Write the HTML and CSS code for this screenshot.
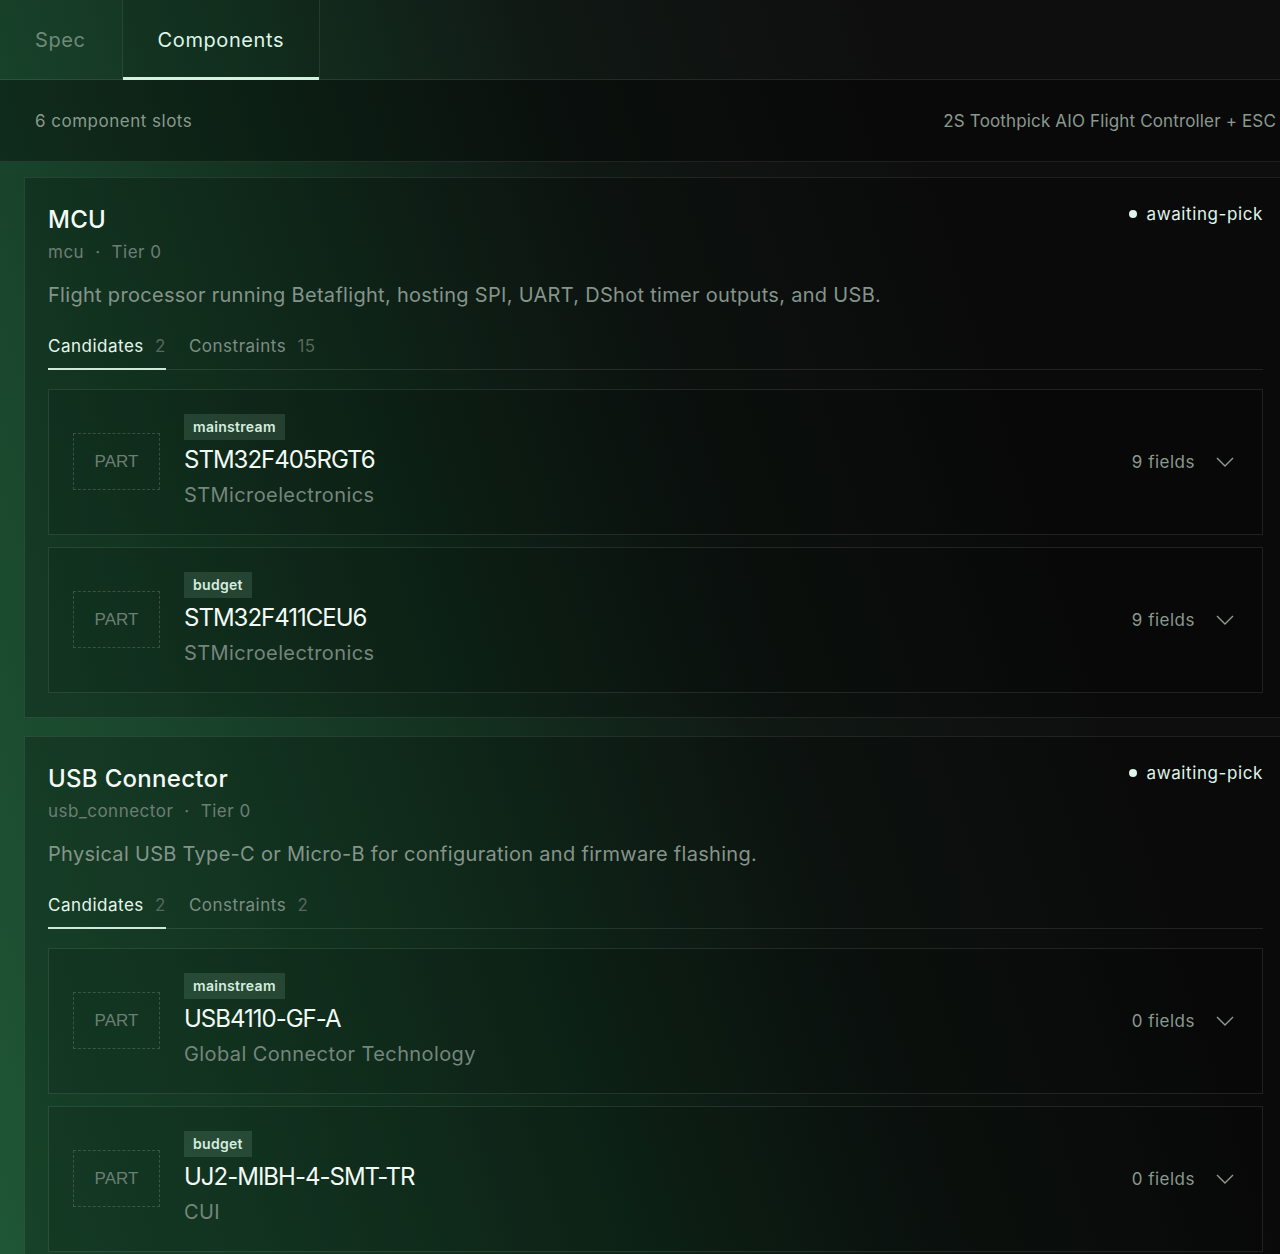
FILE: index.html
```html
<!DOCTYPE html>
<html lang="en">
<head>
    <meta charset="UTF-8">
    <meta name="viewport" content="width=device-width, initial-scale=1.0">
    <title>Board Builder - Components</title>
    <link rel="stylesheet" href="styles.css">
</head>
<body>
    <div class="page">
        <div class="tab-bar">
            <button class="top-tab">Spec</button>
            <button class="top-tab active">Components</button>
        </div>

        <div class="summary-bar">
            <span class="slot-count">6 component slots</span>
            <span class="board-name">2S Toothpick AIO Flight Controller + ESC</span>
        </div>

        <div class="slot-list">
            <!-- MCU slot -->
            <section class="slot-card">
                <div class="slot-head">
                    <div>
                        <h2 class="slot-title">MCU</h2>
                        <div class="slot-meta">
                            <span>mcu</span>
                            <span class="meta-dot">·</span>
                            <span>Tier 0</span>
                        </div>
                    </div>
                    <div class="slot-status"><span class="status-dot"></span>awaiting-pick</div>
                </div>
                <p class="slot-desc">Flight processor running Betaflight, hosting SPI, UART, DShot timer outputs, and USB.</p>
                <div class="sub-tabs">
                    <button class="sub-tab active">Candidates <span class="count">2</span></button>
                    <button class="sub-tab">Constraints <span class="count">15</span></button>
                </div>
                <div class="candidate">
                    <div class="part-thumb">PART</div>
                    <div class="candidate-info">
                        <span class="tier-badge">mainstream</span>
                        <div class="part-number">STM32F405RGT6</div>
                        <div class="maker">STMicroelectronics</div>
                    </div>
                    <div class="candidate-fields">
                        <span>9 fields</span>
                        <svg class="chevron" width="18" height="10" viewBox="0 0 18 10" fill="none"><path d="M1 1l8 8 8-8" stroke="#8e9c94" stroke-width="1.4"/></svg>
                    </div>
                </div>
                <div class="candidate">
                    <div class="part-thumb">PART</div>
                    <div class="candidate-info">
                        <span class="tier-badge">budget</span>
                        <div class="part-number">STM32F411CEU6</div>
                        <div class="maker">STMicroelectronics</div>
                    </div>
                    <div class="candidate-fields">
                        <span>9 fields</span>
                        <svg class="chevron" width="18" height="10" viewBox="0 0 18 10" fill="none"><path d="M1 1l8 8 8-8" stroke="#8e9c94" stroke-width="1.4"/></svg>
                    </div>
                </div>
            </section>

            <!-- USB connector slot -->
            <section class="slot-card">
                <div class="slot-head">
                    <div>
                        <h2 class="slot-title">USB Connector</h2>
                        <div class="slot-meta">
                            <span>usb_connector</span>
                            <span class="meta-dot">·</span>
                            <span>Tier 0</span>
                        </div>
                    </div>
                    <div class="slot-status"><span class="status-dot"></span>awaiting-pick</div>
                </div>
                <p class="slot-desc">Physical USB Type-C or Micro-B for configuration and firmware flashing.</p>
                <div class="sub-tabs">
                    <button class="sub-tab active">Candidates <span class="count">2</span></button>
                    <button class="sub-tab">Constraints <span class="count">2</span></button>
                </div>
                <div class="candidate">
                    <div class="part-thumb">PART</div>
                    <div class="candidate-info">
                        <span class="tier-badge">mainstream</span>
                        <div class="part-number">USB4110-GF-A</div>
                        <div class="maker">Global Connector Technology</div>
                    </div>
                    <div class="candidate-fields">
                        <span>0 fields</span>
                        <svg class="chevron" width="18" height="10" viewBox="0 0 18 10" fill="none"><path d="M1 1l8 8 8-8" stroke="#8e9c94" stroke-width="1.4"/></svg>
                    </div>
                </div>
                <div class="candidate">
                    <div class="part-thumb">PART</div>
                    <div class="candidate-info">
                        <span class="tier-badge">budget</span>
                        <div class="part-number">UJ2-MIBH-4-SMT-TR</div>
                        <div class="maker">CUI</div>
                    </div>
                    <div class="candidate-fields">
                        <span>0 fields</span>
                        <svg class="chevron" width="18" height="10" viewBox="0 0 18 10" fill="none"><path d="M1 1l8 8 8-8" stroke="#8e9c94" stroke-width="1.4"/></svg>
                    </div>
                </div>
            </section>
        </div>
    </div>
</body>
</html>
```

FILE: styles.css
```css
html, body {
    margin: 0;
    padding: 0;
    overflow-x: hidden;
}

body {
    font-family: Inter, "Noto Sans", sans-serif;
    letter-spacing: 0.3px;
    color: #eef7f1;
    min-height: 1254px;
    background-color: #111;
    background-image: linear-gradient(72deg, #1f5635 0%, #19452c 20%, #13301f 38%, #101814 56%, #0e0e0e 76%);
    background-attachment: fixed;
}

.page {
    width: 1311px;
}

button {
    font-family: inherit;
    letter-spacing: inherit;
    background: transparent;
    border: none;
    cursor: pointer;
    padding: 0;
}

/* top tabs */
.tab-bar {
    display: flex;
    height: 80px;
    border-bottom: 1px solid rgba(255, 255, 255, 0.09);
    box-sizing: border-box;
}

.top-tab {
    padding: 0 35px;
    font-size: 20px;
    letter-spacing: 0.6px;
    color: #6f8a7a;
    border-right: 1px solid transparent;
    position: relative;
}

.top-tab.active {
    color: #dff5e8;
    border-left: 1px solid rgba(255, 255, 255, 0.09);
    border-right: 1px solid rgba(255, 255, 255, 0.09);
    background: rgba(0, 0, 0, 0.06);
}

.top-tab.active::after {
    content: "";
    position: absolute;
    left: 0;
    right: 0;
    bottom: -1px;
    height: 3px;
    background: #d2f2de;
}

.summary-bar {
    display: flex;
    justify-content: space-between;
    align-items: center;
    height: 82px;
    padding: 0 35px;
    box-sizing: border-box;
    background: rgba(0, 0, 0, 0.35);
    border-bottom: 1px solid rgba(255, 255, 255, 0.09);
    font-size: 17px;
    letter-spacing: 0.5px;
    color: #8a998f;
}

.board-name {
    letter-spacing: 0.15px;
}

/* slots */
.slot-list {
    display: flex;
    flex-direction: column;
    gap: 18px;
    padding: 15px 24px;
}

.slot-card {
    border: 1px solid rgba(255, 255, 255, 0.09);
    background: rgba(0, 0, 0, 0.22);
    padding: 23px 23px 24px;
}

.slot-head {
    display: flex;
    justify-content: space-between;
    align-items: flex-start;
}

.slot-title {
    margin: 3px 0 0;
    font-size: 24px;
    font-weight: 500;
    color: #f4fbf6;
    line-height: 32px;
}

.slot-meta {
    margin-top: 6px;
    font-size: 17px;
    letter-spacing: 0.5px;
    color: #6c7e74;
    display: flex;
    gap: 10px;
}

.meta-dot {
    padding: 0 1px;
}

.slot-status {
    display: flex;
    align-items: center;
    gap: 10px;
    font-size: 17px;
    letter-spacing: 0.6px;
    color: #dff5e8;
    margin-top: 3px;
}

.status-dot {
    width: 8px;
    height: 8px;
    border-radius: 50%;
    background: #dff5e8;
}

.slot-desc {
    margin: 18px 0 0;
    font-size: 20px;
    color: #85948b;
    line-height: 30px;
}

.sub-tabs {
    display: flex;
    gap: 23px;
    margin-top: 26px;
    border-bottom: 1px solid rgba(255, 255, 255, 0.1);
    margin-bottom: 19px;
}

.sub-tab {
    font-size: 17px;
    letter-spacing: 0.5px;
    color: #7d8d84;
    padding: 0 0 13px;
    position: relative;
}

.sub-tab.active {
    color: #e6f6ec;
}

.sub-tab.active::after {
    content: "";
    position: absolute;
    left: 0;
    right: 0;
    bottom: -1px;
    height: 2px;
    background: #cfe9d9;
}

.count {
    color: #56675d;
    margin-left: 6px;
}

/* candidate rows */
.candidate {
    display: flex;
    align-items: center;
    gap: 24px;
    border: 1px solid rgba(255, 255, 255, 0.1);
    background: rgba(0, 0, 0, 0.1);
    padding: 24px 28px 25px 24px;
    margin-top: 12px;
}

.candidate:first-of-type {
    margin-top: 0;
}

.part-thumb {
    width: 85px;
    height: 55px;
    border: 1px dashed rgba(255, 255, 255, 0.16);
    display: flex;
    align-items: center;
    justify-content: center;
    font-family: "Liberation Sans", Arial, sans-serif;
    font-size: 17px;
    letter-spacing: 0;
    color: #6c7e74;
}

.candidate-info {
    flex: 1;
    display: flex;
    flex-direction: column;
    align-items: flex-start;
}

.tier-badge {
    background: rgba(180, 230, 200, 0.14);
    color: #d6eddf;
    font-size: 14px;
    font-weight: 600;
    letter-spacing: 0.3px;
    padding: 4px 9px;
    line-height: 18px;
}

.part-number {
    font-size: 24px;
    letter-spacing: -1px;
    color: #f2faf5;
    margin-top: 4px;
    line-height: 32px;
}

.maker {
    font-size: 20px;
    letter-spacing: 0.4px;
    color: #75867c;
    margin-top: 5px;
    line-height: 28px;
}

.candidate-fields {
    display: flex;
    align-items: center;
    gap: 21px;
    font-size: 17px;
    letter-spacing: 0.5px;
    color: #8a998f;
}
```
